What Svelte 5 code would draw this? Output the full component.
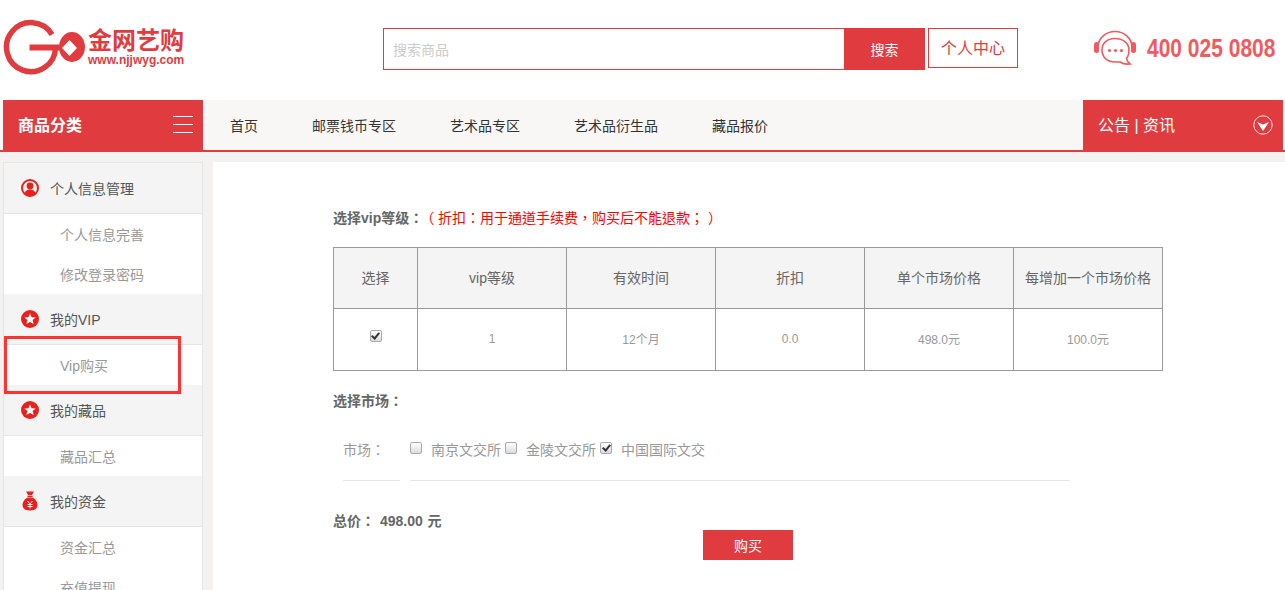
<script lang="ts">
  // VIP purchase page: header, nav, side menu and order form
  const navItems = ['首页', '邮票钱币专区', '艺术品专区', '艺术品衍生品', '藏品报价'];
  const menu = [
    { icon: 'user', title: '个人信息管理', items: ['个人信息完善', '修改登录密码'] },
    { icon: 'star', title: '我的VIP', items: ['Vip购买'] },
    { icon: 'star', title: '我的藏品', items: ['藏品汇总'] },
    { icon: 'bag', title: '我的资金', items: ['资金汇总', '充值提现'] }
  ];
  const headers = ['选择', 'vip等级', '有效时间', '折扣', '单个市场价格', '每增加一个市场价格'];
  const cells = ['1', '12个月', '0.0', '498.0元', '100.0元'];
  const markets = [
    { name: '南京文交所', checked: false },
    { name: '金陵文交所', checked: false },
    { name: '中国国际文交', checked: true }
  ];
</script>

<div class="page">
  <header class="top">
    <div class="logo">
      <svg width="84" height="56" viewBox="-1.5 0 84 56">
        <path d="M47.5 15.5 A24.5 24.5 0 1 0 51 28.5" fill="none" stroke="#e03c3f" stroke-width="5.5" />
        <path d="M25 28.5 H56" stroke="#e03c3f" stroke-width="6" />
        <ellipse cx="67.5" cy="28" rx="13" ry="15" fill="#e03c3f" />
        <path d="M65 21 L72.5 29 L65 37 L57.5 29 Z" fill="#fff" />
      </svg>
      <div class="logo-text">
        <strong>金网艺购</strong>
        <span>www.njjwyg.com</span>
      </div>
    </div>
    <div class="search">
      <div class="search-box">
        <span class="placeholder">搜索商品</span>
        <button class="search-btn">搜索</button>
      </div>
      <a class="center-link" href="#top">个人中心</a>
    </div>
    <div class="phone">
      <svg width="44" height="36" viewBox="0 0 44 36">
        <path d="M5 17 A17 15.5 0 0 1 39 17" fill="none" stroke="#f15a5e" stroke-width="1.6" />
        <rect x="1" y="12" width="5" height="11" rx="2.5" fill="#f15a5e" />
        <rect x="38" y="12" width="5" height="11" rx="2.5" fill="#f15a5e" />
        <path d="M22 8.5 C13.5 8.5 9 13.5 9 20 C9 27 14 32 22 32 L27 32 C29 33.5 32 34.5 37 34 C34.5 32.5 34 30.5 33.5 28.5 C35.5 26 36 23 36 20 C36 13.5 30.5 8.5 22 8.5 Z" fill="none" stroke="#f15a5e" stroke-width="1.6" />
        <circle cx="16.5" cy="20.5" r="1.6" fill="#f15a5e" />
        <circle cx="22.5" cy="20.5" r="1.6" fill="#f15a5e" />
        <circle cx="28.5" cy="20.5" r="1.6" fill="#f15a5e" />
      </svg>
      <span class="phone-num">400 025 0808</span>
    </div>
  </header>

  <nav class="nav">
    <div class="cat">
      <span>商品分类</span>
      <div class="burger"><i></i><i></i><i></i></div>
    </div>
    <ul class="nav-list">
      {#each navItems as item}
        <li>{item}</li>
      {/each}
    </ul>
    <div class="notice">
      <span>公告 | 资讯</span>
      <svg width="20" height="20" viewBox="0 0 20 20">
        <circle cx="10" cy="10" r="9.2" fill="none" stroke="#fff" stroke-width="1" opacity="0.85" />
        <path d="M4 7 L10 9.5 L16 7 L10 16 Z" fill="#fff" />
      </svg>
    </div>
  </nav>

  <div class="main">
    <aside class="side">
      {#each menu as group}
        <div class="group-head">
          {#if group.icon === 'user'}
            <svg width="18" height="18" viewBox="0 0 18 18">
              <circle cx="9" cy="9" r="8" fill="none" stroke="#e8211c" stroke-width="2" />
              <circle cx="9" cy="7" r="3.4" fill="#e8211c" />
              <path d="M3.5 15 C4 11.5 6.5 10.5 9 10.5 C11.5 10.5 14 11.5 14.5 15 C12 17 6 17 3.5 15 Z" fill="#e8211c" />
            </svg>
          {:else if group.icon === 'star'}
            <svg width="18" height="18" viewBox="0 0 18 18">
              <circle cx="9" cy="9" r="9" fill="#e8211c" />
              <path d="M9 3.4 L10.6 7.2 L14.7 7.5 L11.6 10.1 L12.6 14.1 L9 12 L5.4 14.1 L6.4 10.1 L3.3 7.5 L7.4 7.2 Z" fill="#fff" />
            </svg>
          {:else}
            <svg width="18" height="20" viewBox="0 0 18 20">
              <path d="M5 0.5 L13 0.5 L11 4 L7 4 Z" fill="#e8211c" />
              <rect x="6.5" y="4.6" width="5" height="1.4" fill="#e8211c" />
              <path d="M6.5 6.6 L11.5 6.6 C15 8.5 16.5 11.5 16.5 14 C16.5 18 13 19.5 9 19.5 C5 19.5 1.5 18 1.5 14 C1.5 11.5 3 8.5 6.5 6.6 Z" fill="#e8211c" />
              <path d="M6.5 10 L9 13 L11.5 10 M6.5 13.5 H11.5 M6.5 15.5 H11.5 M9 13 V17.5" fill="none" stroke="#fff" stroke-width="0.9" />
            </svg>
          {/if}
          <span>{group.title}</span>
        </div>
        <ul class="group-items">
          {#each group.items as item}
            <li>{item}</li>
          {/each}
        </ul>
      {/each}
      <div class="mark"></div>
    </aside>

    <section class="content">
      <p class="title">选择vip等级：<em>（ 折扣：用于通道手续费，购买后不能退款； ）</em></p>
      <table>
        <colgroup>
          <col style="width:84px" />
          <col style="width:149px" />
          <col style="width:149px" />
          <col style="width:149px" />
          <col style="width:149px" />
          <col style="width:149px" />
        </colgroup>
        <thead>
          <tr>
            {#each headers as h}
              <th>{h}</th>
            {/each}
          </tr>
        </thead>
        <tbody>
          <tr>
            <td><input class="check table-check" type="checkbox" checked /></td>
            {#each cells as c}
              <td>{c}</td>
            {/each}
          </tr>
        </tbody>
      </table>

      <p class="title market-title">选择市场：</p>
      <div class="market">
        <div class="market-label">市场：</div>
        <div class="market-opts">
          {#each markets as m}
            <label><input class="check" type="checkbox" checked={m.checked} /><span>{m.name}</span></label>
          {/each}
        </div>
      </div>

      <p class="title total">总价： 498.00 元</p>
      <div class="buy-row"><button class="buy">购买</button></div>
    </section>
  </div>
</div>

<style>
  :global(body) {
    margin: 0;
    background: #fff;
  }
  .page {
    width: 1285px;
    height: 590px;
    overflow: hidden;
    font-family: "Liberation Sans", "Noto Sans CJK SC", sans-serif;
    font-size: 14px;
    color: #666;
  }
  .top {
    height: 100px;
    display: flex;
    position: relative;
    background: #fff;
  }
  .logo {
    width: 383px;
    padding: 19px 0 0 3px;
    box-sizing: border-box;
    display: flex;
    align-items: flex-start;
  }
  .logo-text {
    display: flex;
    flex-direction: column;
    margin: 9px 0 0 1px;
    color: #e03c3f;
  }
  .logo-text strong {
    font-size: 24px;
    line-height: 26px;
    white-space: nowrap;
  }
  .logo-text span {
    font-size: 12px;
    font-weight: 700;
    line-height: 13px;
    white-space: nowrap;
  }
  .search {
    display: flex;
    align-items: flex-start;
    gap: 3px;
    width: 710px;
    padding-top: 28px;
  }
  .search-box {
    width: 542px;
    height: 42px;
    box-sizing: border-box;
    border: 1px solid #e03c3f;
    display: flex;
    justify-content: space-between;
    align-items: center;
  }
  .placeholder {
    color: #ccc;
    padding-left: 9px;
  }
  .search-btn {
    width: 81px;
    height: 42px;
    margin: 0 -1px 0 0;
    border: 0;
    background: #e03c3f;
    color: #fff;
    font: inherit;
    padding: 0;
  }
  .center-link {
    width: 90px;
    height: 40px;
    box-sizing: border-box;
    border: 1px solid #e03c3f;
    color: #e03c3f;
    font-size: 16px;
    line-height: 40px;
    text-align: center;
    text-decoration: none;
  }
  .phone {
    position: absolute;
    left: 1093px;
    top: 30px;
    display: flex;
    align-items: center;
    gap: 10px;
    color: #f15a5e;
    font-weight: 700;
    font-size: 25px;
    white-space: nowrap;
  }
  .phone-num {
    display: inline-block;
    transform: scaleX(0.84);
    transform-origin: left center;
  }
  .nav {
    height: 50px;
    padding-left: 3px;
    padding-right: 2px;
    border-bottom: 2px solid #e03c3f;
    background: #f8f7f5;
    display: flex;
  }
  .cat {
    width: 200px;
    box-sizing: border-box;
    padding: 0 10px 2px 15px;
    background: #e03c3f;
    color: #fff;
    font-size: 16px;
    font-weight: 700;
    display: flex;
    align-items: center;
    justify-content: space-between;
  }
  .burger {
    width: 20px;
    display: flex;
    flex-direction: column;
    gap: 7px;
  }
  .burger i {
    display: block;
    height: 1px;
    background: #fff;
  }
  .nav-list {
    flex: 1;
    display: flex;
    align-items: center;
    list-style: none;
    margin: 0;
    padding: 0;
    color: #333;
  }
  .nav-list li {
    padding: 0 27px;
  }
  .notice {
    width: 200px;
    box-sizing: border-box;
    padding: 0 10px 0 15px;
    background: #e03c3f;
    color: #fff;
    font-size: 16px;
    display: flex;
    align-items: center;
    justify-content: space-between;
  }
  .notice span {
    padding-bottom: 2px;
  }
  .main {
    height: 438px;
    padding: 10px 0 0 3px;
    box-sizing: border-box;
    background: #f3f2f0;
    display: flex;
    gap: 10px;
  }
  .side {
    width: 200px;
    flex: none;
    box-sizing: border-box;
    border: 1px solid #e5e5e5;
    border-bottom: 0;
    background: #fff;
    position: relative;
    height: 480px;
  }
  .group-head {
    height: 51px;
    box-sizing: border-box;
    border-bottom: 1px solid #e5e5e5;
    background: #f4f4f4;
    display: flex;
    align-items: center;
    gap: 11px;
    padding-left: 17px;
    color: #555;
  }
  .group-items {
    list-style: none;
    margin: 0;
    padding: 0;
    color: #999;
  }
  .group-items li {
    height: 40px;
    line-height: 42px;
    padding-left: 56px;
  }
  .mark {
    position: absolute;
    left: 0;
    top: 173px;
    width: 177px;
    height: 58px;
    box-sizing: border-box;
    border: 3px solid #f33;
  }
  .content {
    flex: 1;
    background: #fff;
    padding: 0 122px 0 120px;
  }
  .title {
    margin: 0;
    font-family: "Liberation Sans", "Noto Sans CJK TC", sans-serif;
    font-size: 14px;
    font-weight: 700;
    line-height: 20px;
    color: #666;
  }
  .content > .title:first-child {
    padding-top: 46px;
  }
  .title em {
    margin-left: 4px;
    font-style: normal;
    font-weight: 400;
    color: #f00;
  }
  table {
    width: 830px;
    margin-top: 19px;
    border-collapse: collapse;
    table-layout: fixed;
  }
  th,
  td {
    box-sizing: border-box;
    border: 1px solid #999;
    text-align: center;
    padding: 0 0 2px;
  }
  th {
    height: 61px;
    background: #f4f4f4;
    font-size: 14px;
    font-weight: 400;
    color: #666;
  }
  td {
    height: 62px;
    font-size: 12px;
    color: #999;
  }
  .check {
    appearance: none;
    width: 12px;
    height: 12px;
    margin: 0;
    box-sizing: border-box;
    border: 1px solid #aaa;
    border-radius: 2px;
    background: linear-gradient(#fff, #dcdcdc);
    position: relative;
    flex: none;
  }
  .check:checked::after {
    content: '';
    position: absolute;
    left: 2.5px;
    top: 0;
    width: 3px;
    height: 6px;
    border: solid #333;
    border-width: 0 2px 2px 0;
    transform: rotate(40deg);
  }
  .table-check {
    display: block;
    margin: -5px auto 0;
  }
  .market-title {
    margin-top: 20px;
  }
  .market {
    display: flex;
    gap: 10px;
    margin-top: 10px;
    padding-left: 10px;
    color: #999;
    font-size: 14px;
  }
  .market-label {
    width: 57px;
    height: 60px;
    line-height: 58px;
    box-sizing: border-box;
    border-bottom: 1px solid #e5e5e5;
    font-family: "Liberation Sans", "Noto Sans CJK TC", sans-serif;
  }
  .market-opts {
    width: 660px;
    height: 60px;
    padding-bottom: 4px;
    box-sizing: border-box;
    border-bottom: 1px solid #e5e5e5;
    display: flex;
    align-items: center;
  }
  .market-opts label {
    display: flex;
    align-items: center;
    gap: 9px;
    margin-right: 4px;
  }
  .market-opts label .check {
    margin-top: -2px;
  }
  .total {
    margin-top: 31px;
    line-height: 18px;
    word-spacing: 1px;
  }
  .buy-row {
    padding-left: 370px;
  }
  .buy {
    display: block;
    width: 90px;
    height: 30px;
    border: 0;
    padding: 0;
    background: #e03c3f;
    color: #fff;
    font: inherit;
    font-size: 14px;
  }
</style>
